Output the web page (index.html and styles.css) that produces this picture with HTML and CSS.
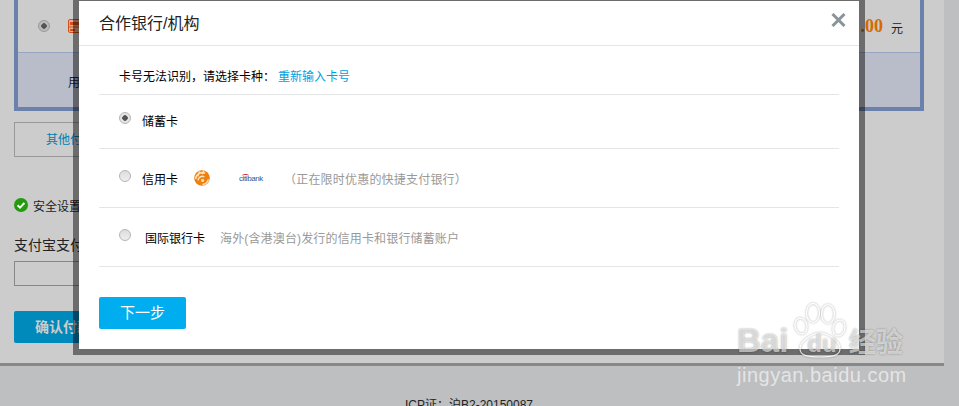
FILE: index.html
```html
<!DOCTYPE html>
<html lang="zh-CN">
<head>
  <meta charset="UTF-8">
  <title>合作银行/机构</title>
  <link rel="stylesheet" href="styles.css">
</head>
<body>

<div class="page">
  <div class="pay-box">
    <div class="pay-row">
      <span class="radio radio-on"></span>
      <svg class="bank-icon" width="13" height="14" viewBox="0 0 13 14">
        <rect x="0.5" y="0.5" width="12" height="13" rx="1.5" fill="#e8b090" stroke="#d2501c"/>
        <rect x="2" y="3" width="9" height="3" fill="#d2501c"/>
        <rect x="0.5" y="7.5" width="12" height="1" fill="#d2501c"/>
        <rect x="2" y="10" width="5" height="2" fill="#d2501c"/>
      </svg>
      <span class="amount">.00</span>
      <span class="unit">元</span>
    </div>
    <div class="pay-tip">用</div>
  </div>

  <div class="other-btn">其他付款方式</div>

  <div class="safe"><svg width="14" height="14" viewBox="0 0 14 14">
    <circle cx="7" cy="7" r="7" fill="#239b0d"/>
    <path d="M3.6 7.2l2.4 2.4 4.4-4.6" fill="none" stroke="#fff" stroke-width="2"/>
  </svg>安全设置检测成功</div>

  <label class="pwd-label">支付宝支付密码：</label>
  <div class="pwd-input"></div>
  <div class="pay-btn">确认付款</div>
</div>

<div class="footer">ICP证：沪B2-20150087</div>

<div class="modal">
  <div class="modal-title">
    合作银行/机构
    <svg class="close" width="15" height="14" viewBox="0 0 15 14">
      <path d="M1.5 1l12 12M13.5 1l-12 12" fill="none" stroke="#8a9499" stroke-width="3"/>
    </svg>
  </div>
  <div class="modal-body">
    <p class="notice">卡号无法识别，请选择卡种：<a href="#">重新输入卡号</a></p>
    <div class="option option-first">
      <span class="radio radio-on"></span>
      <span class="opt-name">储蓄卡</span>
    </div>
    <div class="option">
      <span class="radio"></span>
      <span class="opt-name">信用卡</span>
      <svg class="logo-sun" width="16" height="16" viewBox="0 0 16 16">
        <circle cx="8" cy="8" r="7.8" fill="#ee7f12"/>
        <g fill="none" stroke="#fde3b4" stroke-width="1.5">
          <path d="M1.6 9a6.6 6.6 0 0 1 9.6-5.6"/>
          <path d="M4 10.4a4.4 4.4 0 0 1 6.4-3.6"/>
          <path d="M8.4 14.4a6.4 6.4 0 0 0 6-5"/>
          <path d="M5.6 1.4l-2 5M10 1l-2 3"/>
        </g>
        <circle cx="8.6" cy="10.4" r="1.6" fill="#fde3b4"/>
      </svg>
      <span class="logo-citi">citibank</span>
      <span class="opt-note">（正在限时优惠的快捷支付银行）</span>
    </div>
    <div class="option">
      <span class="radio"></span>
      <span class="opt-name opt-name-wide">国际银行卡</span>
      <span class="opt-note opt-note-wide">海外(含港澳台)发行的信用卡和银行储蓄账户</span>
    </div>
    <div class="next-btn">下一步</div>
  </div>
</div>

<div class="watermark">
  <svg class="paw" width="54" height="56" viewBox="0 0 54 56">
    <g fill="none" stroke="#fff" stroke-width="1.2">
      <ellipse cx="8" cy="23" rx="6" ry="8" transform="rotate(-12 8 23)"/>
      <ellipse cx="20" cy="10" rx="6.5" ry="9.5"/>
      <ellipse cx="35" cy="11" rx="6.5" ry="9.5"/>
      <ellipse cx="46" cy="25" rx="6" ry="8" transform="rotate(12 46 25)"/>
      <path d="M7 46c0-8 12-16 20-16s20 8 20 16c0 7-9 8-20 8s-20-1-20-8z"/>
    </g>
  </svg>
  <div class="wm-top"><span class="wm-bai">Bai</span><span class="wm-du">du</span><span class="wm-jy">经验</span></div>
  <div class="wm-url">jingyan.baidu.com</div>
</div>

</body>
</html>
```

FILE: styles.css
```css
html, body {
  height: 406px;
  overflow: hidden;
}
body {
  margin: 0;
  background: #bebfc1;
  font-family: "Liberation Sans", "Noto Sans CJK SC", sans-serif;
  font-size: 12px;
  color: #222;
}
.page {
  box-sizing: border-box;
  width: 944px;
  height: 366px;
  padding: 0 20px 0 14px;
  background: #ccc;
  border-bottom: 3px solid #888;
}

/* page behind the dialog */
.pay-box {
  box-sizing: border-box;
  height: 111px;
  border: 4px solid #6b80ab;
  border-top: 0;
  background: #b9bdc9;
}
.pay-row {
  position: relative;
  box-sizing: border-box;
  height: 53px;
  display: flex;
  align-items: center;
  padding-left: 20px;
  background: #ccc;
  border-bottom: 1px solid #98a6c4;
}
.bank-icon {
  margin-left: 18px;
}
.amount {
  margin-left: auto;
  font-family: "Liberation Serif", serif;
  font-size: 18px;
  font-weight: bold;
  color: #d56a00;
}
.unit {
  margin: 3px 17px 0 8px;
  font-size: 12px;
}
.pay-tip {
  padding: 20px 0 0 50px;
}
.other-btn {
  box-sizing: border-box;
  width: 130px;
  height: 35px;
  margin-top: 11px;
  padding-left: 31px;
  border: 1px solid #999;
  color: #0080b0;
  line-height: 35px;
}
.safe {
  display: flex;
  align-items: center;
  gap: 5px;
  margin-top: 41px;
  height: 14px;
}
.pwd-label {
  display: block;
  margin-top: 23px;
  font-size: 14px;
  line-height: 20px;
}
.pwd-input {
  box-sizing: border-box;
  width: 160px;
  height: 25px;
  margin-top: 6px;
  border: 1px solid #888;
}
.pay-btn {
  width: 130px;
  height: 32px;
  margin-top: 25px;
  padding-left: 21px;
  box-sizing: border-box;
  border-radius: 2px;
  background: #0089bb;
  color: #ccc;
  font-size: 14px;
  font-weight: bold;
  line-height: 32px;
}
.footer {
  width: 938px;
  margin-top: 31px;
  text-align: center;
  line-height: 16px;
  color: #222;
}

/* dialog */
.modal {
  position: absolute;
  left: 73px;
  top: 0;
  width: 780px;
  height: 348px;
  background: #fff;
  background-clip: padding-box;
  border: 6px solid rgba(0, 0, 0, 0.47);
  border-top-width: 1px;
}
.modal-title {
  position: relative;
  height: 44px;
  padding-left: 20px;
  border-bottom: 1px solid #e5e5e5;
  font-size: 16px;
  line-height: 46px;
  color: #222;
}
.close {
  position: absolute;
  right: 13px;
  top: 12px;
}
.modal-body {
  padding: 0 20px;
}
.notice {
  margin: 0;
  height: 48px;
  padding-left: 20px;
  border-bottom: 1px solid #e5e5e5;
  line-height: 62px;
  color: #000;
}
.notice a {
  margin-left: 3px;
  color: #00a0e0;
  text-decoration: none;
}
.option {
  box-sizing: border-box;
  position: relative;
  display: flex;
  align-items: center;
  height: 59px;
  padding: 0 0 0 20px;
  border-bottom: 1px solid #e5e5e5;
}
.option-first {
  height: 54px;
  padding-bottom: 2px;
}
.radio {
  position: relative;
  top: -2px;
  box-sizing: border-box;
  width: 12px;
  height: 12px;
  border: 1px solid #b5b5b5;
  border-radius: 50%;
  background: linear-gradient(#ddd, #eee);
  flex: none;
}
.radio-on {
  top: -3px;
  background: radial-gradient(circle, #555 0 2.5px, #e4e4e4 3px);
}
.pay-row .radio {
  top: 0;
  background: radial-gradient(circle, #555 0 2.5px, #bbb 3px);
  border-color: #999;
}
.opt-name {
  margin-left: 11px;
  color: #000;
}
.opt-name-wide {
  margin-left: 14px;
}
.logo-sun {
  margin-left: 16px;
}
.logo-citi {
  position: relative;
  width: 25px;
  margin-left: 29px;
  font-size: 8px;
  letter-spacing: -0.4px;
  color: #2a5a9c;
}
.logo-citi::before {
  content: "";
  position: absolute;
  left: 3px;
  top: 0;
  width: 7px;
  height: 3px;
  border-top: 1px solid #d0282c;
  border-radius: 50%;
}
.opt-note {
  margin-left: 20px;
  letter-spacing: 0.2px;
  color: #999;
}
.opt-note-wide {
  margin-left: 15px;
  letter-spacing: 0.15px;
}
.next-btn {
  width: 87px;
  height: 32px;
  margin-top: 30px;
  border-radius: 2px;
  background: #00aef0;
  color: #fff;
  font-size: 15px;
  line-height: 32px;
  text-align: center;
}

/* watermark, lies over everything */
.watermark {
  position: absolute;
  left: 737px;
  top: 303px;
  width: 180px;
  color: rgba(255, 255, 255, 0.6);
  text-shadow: 0 0 2px rgba(0, 0, 0, 0.4);
}
.paw {
  position: absolute;
  left: 56px;
  top: 0;
  opacity: 0.8;
  filter: drop-shadow(0 0 1px rgba(0, 0, 0, 0.45));
}
.wm-top {
  position: relative;
  padding-top: 20px;
  height: 36px;
  display: flex;
  align-items: baseline;
  font-size: 33px;
  line-height: 36px;
}
.wm-bai {
  font-weight: bold;
}
.wm-du {
  margin-left: 19px;
  font-size: 24px;
  font-weight: bold;
}
.wm-jy {
  margin-left: 12px;
  font-size: 27px;
  font-weight: bold;
}
.wm-url {
  margin-top: 4px;
  font-size: 20px;
  line-height: 24px;
  letter-spacing: 0.5px;
  text-shadow: none;
}
```
